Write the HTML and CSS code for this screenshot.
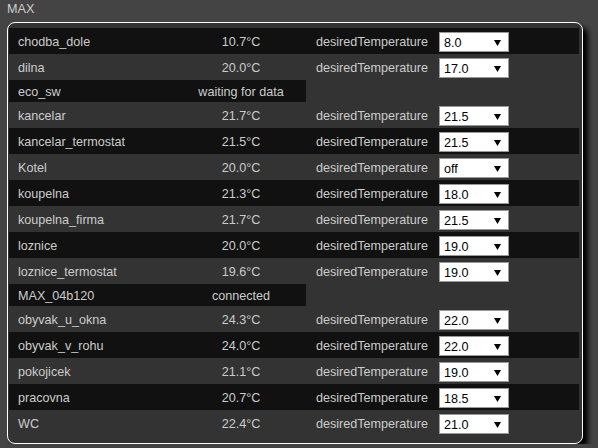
FILE: index.html
```html
<!DOCTYPE html>
<html lang="cs">
<head>
  <meta charset="UTF-8" />
  <title>MAX</title>
  <link rel="stylesheet" href="styles.css">
</head>
<body>
  <div class="room-title">MAX</div>
  <div class="block">
    <table class="devices">
      <colgroup>
        <col class="c-name"><col class="c-state"><col class="c-cmd"><col class="c-val">
      </colgroup>
      <tr class="odd"><td class="name">chodba_dole</td><td class="state">10.7°C</td><td class="cmd">desiredTemperature</td><td><div class="sel"><span>8.0</span><svg width="7" height="6" viewBox="0 0 7 6"><path d="M0 0H7L3.5 6Z"/></svg></div></td></tr>
      <tr class="even"><td class="name">dilna</td><td class="state">20.0°C</td><td class="cmd">desiredTemperature</td><td><div class="sel"><span>17.0</span><svg width="7" height="6" viewBox="0 0 7 6"><path d="M0 0H7L3.5 6Z"/></svg></div></td></tr>
      <tr class="odd"><td class="name">eco_sw</td><td class="state">waiting for data</td></tr>
      <tr class="even"><td class="name">kancelar</td><td class="state">21.7°C</td><td class="cmd">desiredTemperature</td><td><div class="sel"><span>21.5</span><svg width="7" height="6" viewBox="0 0 7 6"><path d="M0 0H7L3.5 6Z"/></svg></div></td></tr>
      <tr class="odd"><td class="name">kancelar_termostat</td><td class="state">21.5°C</td><td class="cmd">desiredTemperature</td><td><div class="sel"><span>21.5</span><svg width="7" height="6" viewBox="0 0 7 6"><path d="M0 0H7L3.5 6Z"/></svg></div></td></tr>
      <tr class="even"><td class="name">Kotel</td><td class="state">20.0°C</td><td class="cmd">desiredTemperature</td><td><div class="sel"><span>off</span><svg width="7" height="6" viewBox="0 0 7 6"><path d="M0 0H7L3.5 6Z"/></svg></div></td></tr>
      <tr class="odd"><td class="name">koupelna</td><td class="state">21.3°C</td><td class="cmd">desiredTemperature</td><td><div class="sel"><span>18.0</span><svg width="7" height="6" viewBox="0 0 7 6"><path d="M0 0H7L3.5 6Z"/></svg></div></td></tr>
      <tr class="even"><td class="name">koupelna_firma</td><td class="state">21.7°C</td><td class="cmd">desiredTemperature</td><td><div class="sel"><span>21.5</span><svg width="7" height="6" viewBox="0 0 7 6"><path d="M0 0H7L3.5 6Z"/></svg></div></td></tr>
      <tr class="odd"><td class="name">loznice</td><td class="state">20.0°C</td><td class="cmd">desiredTemperature</td><td><div class="sel"><span>19.0</span><svg width="7" height="6" viewBox="0 0 7 6"><path d="M0 0H7L3.5 6Z"/></svg></div></td></tr>
      <tr class="even"><td class="name">loznice_termostat</td><td class="state">19.6°C</td><td class="cmd">desiredTemperature</td><td><div class="sel"><span>19.0</span><svg width="7" height="6" viewBox="0 0 7 6"><path d="M0 0H7L3.5 6Z"/></svg></div></td></tr>
      <tr class="odd"><td class="name">MAX_04b120</td><td class="state">connected</td></tr>
      <tr class="even"><td class="name">obyvak_u_okna</td><td class="state">24.3°C</td><td class="cmd">desiredTemperature</td><td><div class="sel"><span>22.0</span><svg width="7" height="6" viewBox="0 0 7 6"><path d="M0 0H7L3.5 6Z"/></svg></div></td></tr>
      <tr class="odd"><td class="name">obyvak_v_rohu</td><td class="state">24.0°C</td><td class="cmd">desiredTemperature</td><td><div class="sel"><span>22.0</span><svg width="7" height="6" viewBox="0 0 7 6"><path d="M0 0H7L3.5 6Z"/></svg></div></td></tr>
      <tr class="even"><td class="name">pokojicek</td><td class="state">21.1°C</td><td class="cmd">desiredTemperature</td><td><div class="sel"><span>19.0</span><svg width="7" height="6" viewBox="0 0 7 6"><path d="M0 0H7L3.5 6Z"/></svg></div></td></tr>
      <tr class="odd"><td class="name">pracovna</td><td class="state">20.7°C</td><td class="cmd">desiredTemperature</td><td><div class="sel"><span>18.5</span><svg width="7" height="6" viewBox="0 0 7 6"><path d="M0 0H7L3.5 6Z"/></svg></div></td></tr>
      <tr class="even"><td class="name">WC</td><td class="state">22.4°C</td><td class="cmd">desiredTemperature</td><td><div class="sel"><span>21.0</span><svg width="7" height="6" viewBox="0 0 7 6"><path d="M0 0H7L3.5 6Z"/></svg></div></td></tr>
    </table>
  </div>
</body>
</html>
```

FILE: styles.css
```css
body {
  margin: 0;
  background: #444;
  color: #ccc;
  font-family: "Liberation Sans", Arial, sans-serif;
  font-size: 12.6px;
  line-height: 16px;
}
.room-title {
  padding: 1px 0 0 7px;
  height: 21px;
}
.block {
  margin-left: 7px;
  width: 572px;
  padding: 5px 1px 7px;
  background: #333;
  border: 1px solid #fff;
  border-radius: 8px;
  box-shadow: 5px 5px 5px #000;
}
.devices {
  width: 570px;
  border-collapse: collapse;
  table-layout: fixed;
}
.c-name { width: 167px; }
.c-state { width: 130px; }
.c-cmd { width: 133px; }
.devices td {
  padding: 4px 0 2px;
  vertical-align: middle;
  white-space: nowrap;
}
.odd { background: #111; }
.even { background: #333; }
.name { padding-left: 9px !important; }
.state { text-align: center; }
.cmd { padding-left: 10px !important; }
.devices td.val {
  padding: 3px 0;
}
.sel {
  box-sizing: border-box;
  width: 70px;
  height: 20px;
  background: #fff;
  border: 1px solid #999;
  color: #000;
  display: flex;
  align-items: center;
  justify-content: space-between;
  padding: 1px 7px 0 4px;
}
.sel svg {
  fill: #000;
}
```
